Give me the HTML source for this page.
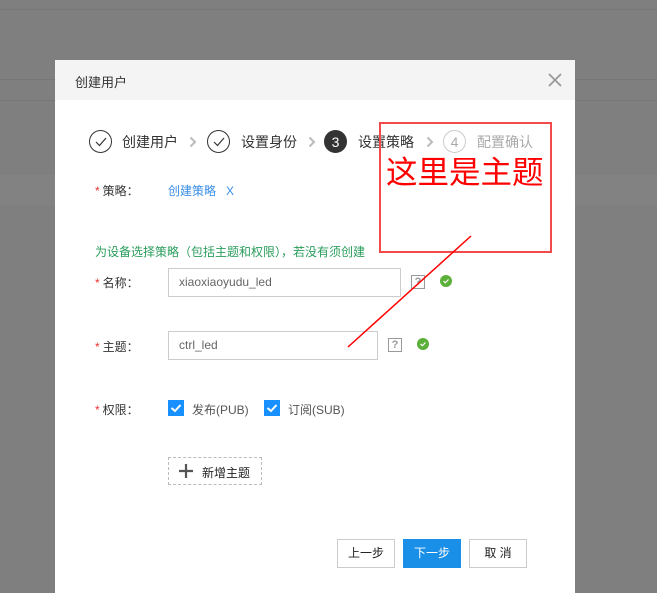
<!DOCTYPE html>
<html><head><meta charset="utf-8"><style>
*{margin:0;padding:0;box-sizing:border-box}
body{width:657px;height:593px;overflow:hidden;background:#7f7f7f;position:relative;font-family:"Liberation Sans","Noto Sans CJK SC",sans-serif;font-size:12px;color:#333}
.a{position:absolute}
.ln{position:absolute;left:0;width:657px;height:1px;background:#777}
.modal{position:absolute;left:55px;top:60px;width:520px;height:533px;background:#fff}
.hd{position:absolute;left:0;top:0;width:520px;height:40px;background:#f4f4f4}
.c{position:absolute;width:23px;height:23px;border-radius:50%;border:1px solid #333;display:flex;align-items:center;justify-content:center;font-size:14px}
.st{position:absolute;font-size:14px;line-height:16px}
.chev{position:absolute}
.lab{position:absolute;left:40px;font-size:12px}
.lab b{color:#e33;font-weight:normal;margin-right:3px}
.in{position:absolute;left:113px;height:29px;border:1px solid #ccc;padding-left:10px;line-height:27px;color:#666;font-size:12px}
.q{position:absolute;width:14px;height:14px;border:1px solid #999;color:#999;font-size:11px;font-weight:bold;text-align:center;line-height:12px}
.ok{position:absolute;width:12px;height:12px;border-radius:50%;background:#5cb03a}
.cb{position:absolute;width:16px;height:16px;background:#1890ff}
.btn{position:absolute;top:479px;width:58px;height:29px;border:1px solid #ccc;text-align:center;line-height:27px;font-size:12px;color:#222}
</style></head><body>
<div class="ln" style="top:9px"></div>
<div class="ln" style="top:79px"></div>
<div class="ln" style="top:100px"></div>
<div class="a" style="left:0;top:175px;width:657px;height:30px;background:#828282"></div>
<div class="modal">
 <div class="hd"><div class="a" style="left:20px;top:12px;font-size:13px">创建用户</div>
 <svg class="a" style="left:493px;top:13px" width="14" height="14"><path d="M1 1L13 13M13 1L1 13" stroke="#999" stroke-width="1.8"/></svg></div>
 <div class="c" style="left:34px;top:70px"><svg width="12" height="10"><path d="M1 5L4.5 8.5L11 1" fill="none" stroke="#333" stroke-width="1.2"/></svg></div>
 <div class="st" style="left:67px;top:74px">创建用户</div>
 <svg class="chev" style="left:134px;top:76px" width="8" height="12"><path d="M1.5 1.5L6 6L1.5 10.5" fill="none" stroke="#bbb" stroke-width="2"/></svg>
 <div class="c" style="left:152px;top:70px"><svg width="12" height="10"><path d="M1 5L4.5 8.5L11 1" fill="none" stroke="#333" stroke-width="1.2"/></svg></div>
 <div class="st" style="left:186px;top:74px">设置身份</div>
 <svg class="chev" style="left:253px;top:76px" width="8" height="12"><path d="M1.5 1.5L6 6L1.5 10.5" fill="none" stroke="#bbb" stroke-width="2"/></svg>
 <div class="c" style="left:269px;top:70px;background:#333;color:#fff">3</div>
 <div class="st" style="left:303px;top:74px">设置策略</div>
 <svg class="chev" style="left:371px;top:76px" width="8" height="12"><path d="M1.5 1.5L6 6L1.5 10.5" fill="none" stroke="#bbb" stroke-width="2"/></svg>
 <div class="c" style="left:388px;top:70px;border-color:#ccc;color:#aaa">4</div>
 <div class="st" style="left:422px;top:74px;color:#aaa">配置确认</div>
 <div class="lab" style="top:122px"><b>*</b>策略：</div>
 <div class="a" style="left:113px;top:122px;color:#3a8ee6">创建策略 &nbsp;&nbsp;X</div>
 <div class="a" style="left:40px;top:183px;color:#2a9d5c">为设备选择策略（包括主题和权限），若没有须创建</div>
 <div class="lab" style="top:214px"><b>*</b>名称：</div>
 <div class="in" style="top:208px;width:233px">xiaoxiaoyudu_led</div>
 <div class="q" style="left:356px;top:215px">?</div>
 <div class="ok" style="left:385px;top:215px"><svg width="12" height="12"><path d="M3.5 6L5.3 7.8L8.5 4.5" fill="none" stroke="#fff" stroke-width="1.2"/></svg></div>
 <div class="lab" style="top:278px"><b>*</b>主题：</div>
 <div class="in" style="top:271px;width:210px">ctrl_led</div>
 <div class="q" style="left:333px;top:278px">?</div>
 <div class="ok" style="left:362px;top:278px"><svg width="12" height="12"><path d="M3.5 6L5.3 7.8L8.5 4.5" fill="none" stroke="#fff" stroke-width="1.2"/></svg></div>
 <div class="lab" style="top:341px"><b>*</b>权限：</div>
 <div class="cb" style="left:113px;top:340px"><svg width="16" height="16"><path d="M3.5 8L7 11L12.5 5" fill="none" stroke="#fff" stroke-width="2"/></svg></div>
 <div class="a" style="left:137px;top:341px;color:#555">发布(PUB)</div>
 <div class="cb" style="left:209px;top:340px"><svg width="16" height="16"><path d="M3.5 8L7 11L12.5 5" fill="none" stroke="#fff" stroke-width="2"/></svg></div>
 <div class="a" style="left:233px;top:341px;color:#555">订阅(SUB)</div>
 <div class="a" style="left:113px;top:397px;width:94px;height:28px;border:1px dashed #bbb"></div>
 <svg class="a" style="left:124px;top:404px" width="14" height="14"><path d="M7 0V14M0 7H14" stroke="#555" stroke-width="2.2"/></svg>
 <div class="a" style="left:147px;top:404px;font-size:12px;color:#222">新增主题</div>
 <div class="btn" style="left:282px">上一步</div>
 <div class="btn" style="left:348px;background:#1a8fe8;border-color:#1a8fe8;color:#fff">下一步</div>
 <div class="btn" style="left:414px">取 消</div>
</div>
<div class="a" style="left:379px;top:122px;width:173px;height:131px;border:2px solid #f24a4a"></div>
<div class="a" style="left:386px;top:154px;font-size:31.5px;line-height:36px;color:#f00">这里是主题</div>
<svg class="a" style="left:0;top:0" width="657" height="593"><path d="M471 236L348 347" stroke="#f00" stroke-width="1.5"/></svg>
</body></html>
